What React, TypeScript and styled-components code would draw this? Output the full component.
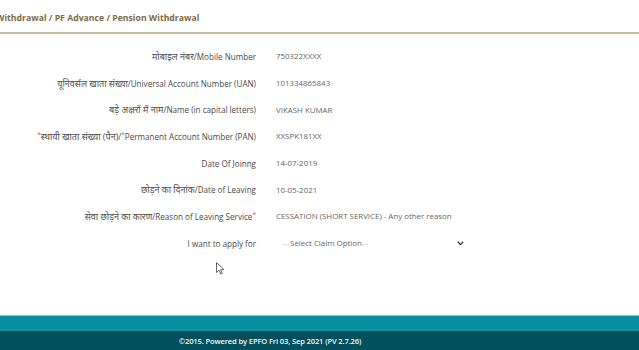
import React from "react";
import styled, { createGlobalStyle } from "styled-components";

const Global = createGlobalStyle`
  html, body { margin: 0; padding: 0; background: #fff; }
  body { font-family: "Open Sans", "Noto Sans", sans-serif; }
`;

const Page = styled.div`
  position: relative;
  width: 639px;
  height: 350px;
  display: flex;
  flex-direction: column;
  overflow: hidden;
`;

const Header = styled.div`
  height: 34px;
  border-bottom: 2px solid #c9bb9c;
  display: flex;
  align-items: center;
  padding-top: 3px;
  box-sizing: border-box;
`;

const Crumb = styled.div`
  margin-left: -4px;
  font-family: "Open Sans", sans-serif;
  font-weight: 700;
  font-size: 8.7px;
  color: #7e6a43;
  white-space: nowrap;
`;

const Form = styled.div`
  margin-top: 9px;
  display: grid;
  grid-template-columns: 256px 1fr;
  grid-auto-rows: 26.7px;
  column-gap: 20px;
  align-items: center;
`;

const Label = styled.div`
  text-align: right;
  font-size: 8.1px;
  color: #4a4a4a;
  white-space: nowrap;
`;

const Hindi = styled.span`
  font-size: 9px;
  color: #4f4f4f;
`;

const Value = styled.div`
  font-size: 7.9px;
  color: #666;
  white-space: nowrap;
`;

const Star = styled.span`
  color: #d9534f;
  font-size: 6.5px;
  vertical-align: top;
`;

const Select = styled.div`
  width: 181px;
  padding-left: 7px;
  display: flex;
  align-items: center;
  justify-content: space-between;
  font-size: 7.9px;
  color: #666;
`;

const Dash = styled.span`
  color: #aaa;
  letter-spacing: 1px;
`;

const Spacer = styled.div`
  flex: 1;
`;

const FooterTop = styled.div`
  height: 15px;
  background: #06909f;
  border-top: 1px solid #9fbfc4;
`;

const FooterBottom = styled.div`
  height: 19px;
  background: #024f5d;
  display: flex;
  align-items: center;
  justify-content: center;
  padding-right: 99px;
  font-family: "Open Sans", sans-serif;
  font-weight: 600;
  font-size: 7.6px;
  color: #f2f6f7;
  letter-spacing: -0.15px;
`;

const Cursor = styled.svg`
  position: absolute;
  left: 216px;
  top: 262px;
`;

const rows: { label: React.ReactNode; value: string }[] = [
  { label: <><Hindi>मोबाइल नंबर</Hindi>/Mobile Number</>, value: "750322XXXX" },
  { label: <><Hindi>यूनिवर्सल खाता संख्या</Hindi>/Universal Account Number (UAN)</>, value: "101334865843" },
  { label: <><Hindi>बड़े अक्षरों में नाम</Hindi>/Name (in capital letters)</>, value: "VIKASH KUMAR" },
  {
    label: (
      <>
        <Star>*</Star><Hindi>स्थायी खाता संख्या (पैन)</Hindi>/<Star>*</Star>Permanent Account Number (PAN)
      </>
    ),
    value: "XXSPK181XX",
  },
  { label: "Date Of Joinng", value: "14-07-2019" },
  { label: <><Hindi>छोड़ने का दिनांक</Hindi>/Date of Leaving</>, value: "10-05-2021" },
  {
    label: (
      <>
        <Hindi>सेवा छोड़ने का कारण</Hindi>/Reason of Leaving Service<Star>*</Star>
      </>
    ),
    value: "CESSATION (SHORT SERVICE) - Any other reason",
  },
];

export default function App() {
  return (
    <Page>
      <Global />
      <Header>
        <Crumb>Withdrawal / PF Advance / Pension Withdrawal</Crumb>
      </Header>
      <Form>
        {rows.map((r, i) => (
          <React.Fragment key={i}>
            <Label>{r.label}</Label>
            <Value>{r.value}</Value>
          </React.Fragment>
        ))}
        <Label>I want to apply for</Label>
        <Select>
          <span>
            <Dash>--</Dash>Select Claim Option<Dash>--</Dash>
          </span>
          <svg width="7" height="5" viewBox="0 0 7 5">
            <path d="M0.8 0.8 L3.5 3.6 L6.2 0.8" fill="none" stroke="#333" strokeWidth="1.3" />
          </svg>
        </Select>
      </Form>
      <Spacer />
      <FooterTop />
      <FooterBottom>©2015. Powered by EPFO Fri 03, Sep 2021 (PV 2.7.26)</FooterBottom>
      <Cursor width="9" height="13" viewBox="0 0 9 13">
        <path d="M0.5 0.5 L0.5 10.5 L3 8.2 L4.8 12 L6.3 11.3 L4.6 7.7 L8 7.7 Z" fill="#fff" stroke="#444" strokeWidth="0.8" />
      </Cursor>
    </Page>
  );
}
